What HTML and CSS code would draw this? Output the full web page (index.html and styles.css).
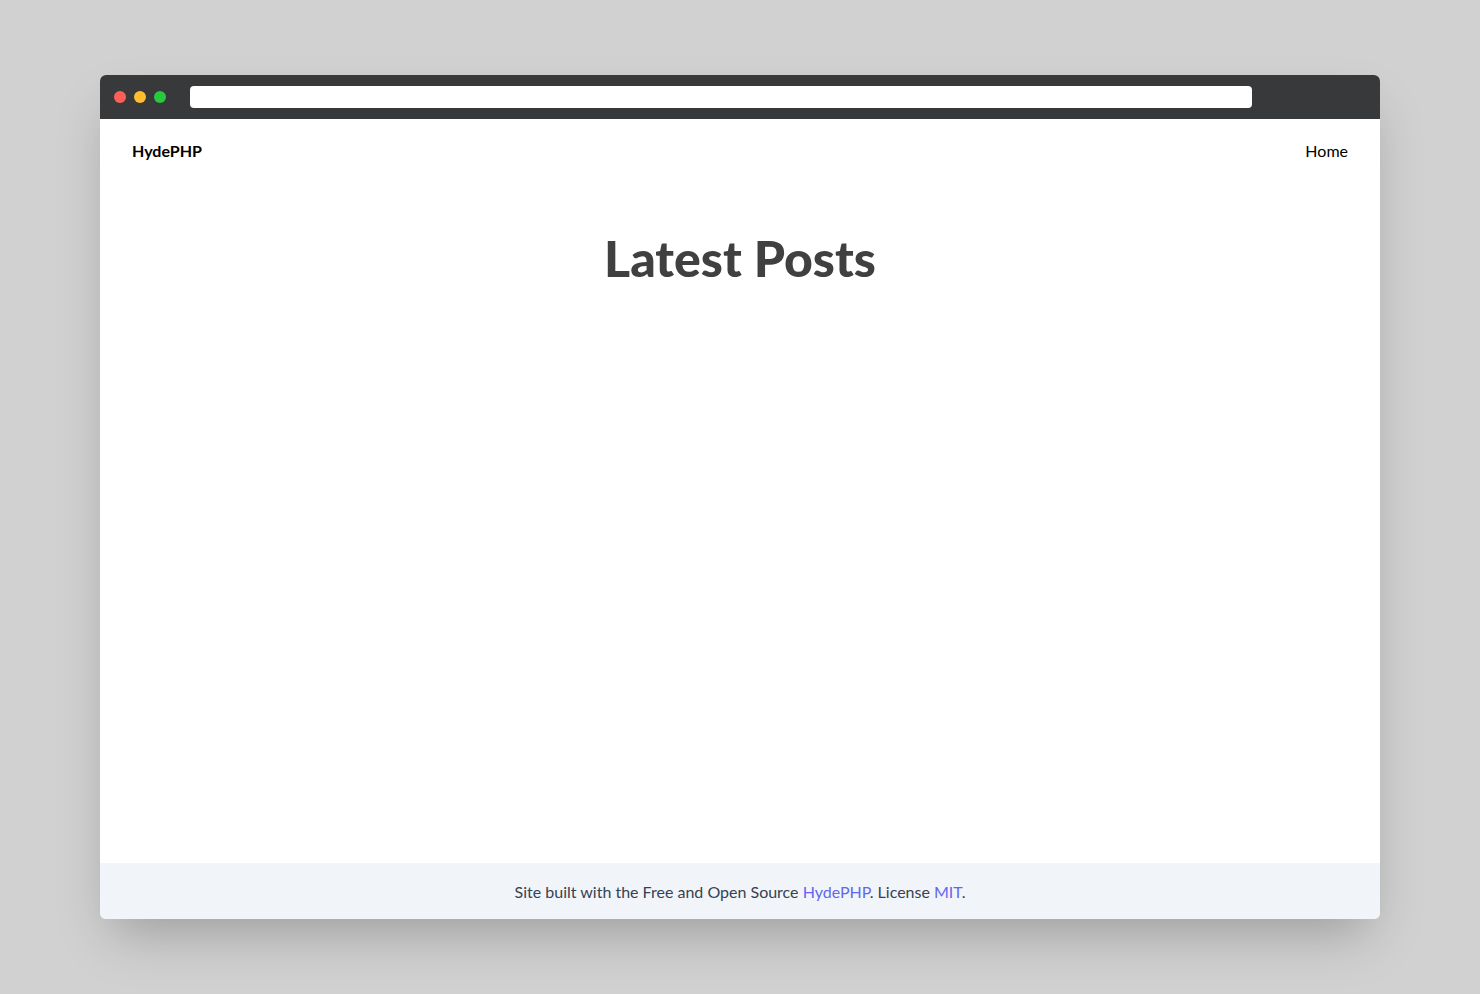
FILE: index.html
```html
<!DOCTYPE html>
<html>
<head>
<meta charset="utf-8">
<link rel="stylesheet" href="styles.css">
</head>
<body>
<div class="stage">
  <div class="window">
    <div class="titlebar">
      <div class="dots">
        <span class="dot red"></span>
        <span class="dot yellow"></span>
        <span class="dot green"></span>
      </div>
      <div class="address"></div>
    </div>
    <div class="page">
      <nav class="nav">
        <a class="brand">HydePHP</a>
        <a class="home">Home</a>
      </nav>
      <main class="main">
        <h1 class="title">Latest Posts</h1>
      </main>
      <footer class="footer">
        <p>Site built with the Free and Open Source <a class="link">HydePHP</a>. License <a class="link">MIT</a>.</p>
      </footer>
    </div>
  </div>
</div>
</body>
</html>
```
FILE: styles.css
```css
* { box-sizing: border-box; }
html, body { margin: 0; padding: 0; }
body {
  background: #d1d1d1;
  font-family: "Lato", "Noto Sans", sans-serif;
  width: 1480px;
  height: 994px;
  overflow: hidden;
}
.stage {
  padding: 75px 100px 0 100px;
}
.window {
  height: 844px;
  border-radius: 6px;
  background: #fff;
  display: flex;
  flex-direction: column;
  box-shadow: 0 25px 50px -12px rgba(0,0,0,0.25);
  overflow: hidden;
}
.titlebar {
  height: 44px;
  background: #38393b;
  display: flex;
  align-items: center;
  padding-left: 14px;
  flex-shrink: 0;
}
.dots { display: flex; gap: 8px; }
.dot { width: 12px; height: 12px; border-radius: 50%; display: block; }
.red { background: #ff5f56; }
.yellow { background: #ffbd2e; }
.green { background: #27c93f; }
.address {
  margin-left: 24px;
  width: 1062px;
  height: 22px;
  background: #fff;
  border-radius: 4px;
}
.page {
  flex: 1;
  display: flex;
  flex-direction: column;
}
.nav {
  display: flex;
  justify-content: space-between;
  align-items: center;
  padding: 18px 32px 0 32px;
  height: 44px;
  font-size: 16px;
  color: #000;
}
.brand { font-weight: 700; }
.home { font-weight: 400; }
.main { flex: 1; }
.title {
  margin: 70px 0 0 0;
  text-align: center;
  font-size: 50px;
  font-weight: 900;
  color: #404040;
  line-height: 1;
}
.footer {
  height: 56px;
  background: #f1f5f9;
  display: flex;
  align-items: center;
  justify-content: center;
  font-size: 16px;
  color: #374151;
}
.footer p { margin: 0; }
.link { color: #6366f1; }
```
